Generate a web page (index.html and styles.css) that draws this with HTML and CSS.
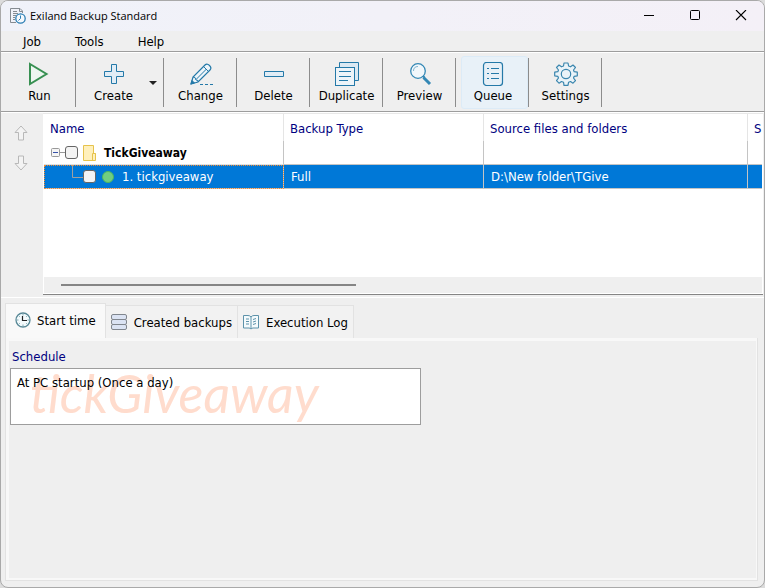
FILE: index.html
```html
<!DOCTYPE html>
<html lang="en">
<head>
<meta charset="utf-8">
<title>Exiland Backup Standard</title>
<link rel="stylesheet" href="styles.css">
</head>
<body>
<div class="window">
  <header class="titlebar">
    <svg class="app-icon" width="16" height="16" viewBox="0 0 16 16" fill="none">
      <path d="M6 14.500H.5V.5H10L12.500 3V5M9.500 1V3.500H12.500M3 3.500H7M3 5.500H8M3 7.500H6M3 9.500H5M3 11.500H5" stroke="#858b91"/>
      <circle cx="10.500" cy="10.500" r="4.700" fill="#f4f8fc" stroke="#2a7db3" stroke-width="1.300"/>
      <path d="M10.500 7.500V10.500L8.500 12.500" stroke="#2a7db3"/>
    </svg>
    <span class="title">Exiland Backup Standard</span>
    <button class="caption" aria-label="Minimize"><svg width="12" height="12" viewBox="0 0 12 12"><path d="M1 5.500H11" stroke="#000"/></svg></button>
    <button class="caption" aria-label="Maximize"><svg width="12" height="12" viewBox="0 0 12 12"><rect x="1.500" y=".5" width="9" height="9" rx="1" fill="none" stroke="#000"/></svg></button>
    <button class="caption" aria-label="Close"><svg width="12" height="12" viewBox="0 0 12 12"><path d="M1 0L11 10M11 0L1 10" stroke="#000" stroke-width="1.100"/></svg></button>
  </header>

  <nav class="menubar">
    <button>Job</button>
    <button>Tools</button>
    <button>Help</button>
  </nav>

  <div class="toolbar">
    <div class="tool"><button>
      <svg width="24" height="24" viewBox="0 0 24 24"><path d="M2 2L18.500 12L2 22Z" fill="#edf6f0" stroke="#389052" stroke-width="2"/></svg>
      <span>Run</span></button></div>
    <div class="tool split"><button>
      <svg width="24" height="24" viewBox="0 0 24 24"><path d="M9.500 2.500H14.500V9.500H21.500V14.500H14.500V21.500H9.500V14.500H2.500V9.500H9.500Z" fill="#e1edf6" stroke="#2479a8"/></svg>
      <span>Create</span></button>
      <button class="drop" aria-label="Create options"><svg width="8" height="4" viewBox="0 0 8 4"><path d="M0 0H8L4 4Z" fill="#222"/></svg></button></div>
    <div class="tool"><button>
      <svg width="24" height="24" viewBox="0 0 24 24" fill="none" stroke="#2479a8"><path d="M2 22L4 15L16 3Q18 1 20.500 3.500Q23 6 21 8L9 20Z" stroke-width="1.200" fill="#edf5fa"/><path d="M14.500 4.500L19.500 9.500M17.500 7L7 17.500M4 15L6 15.500L7 18L9 18.500V20"/><path d="M2 22L3 18.500L5.500 21Z" fill="#2479a8"/><path d="M11 22.500H24" stroke-dasharray="3 2"/></svg>
      <span>Change</span></button></div>
    <div class="tool"><button>
      <svg width="24" height="24" viewBox="0 0 24 24"><path d="M2.500 9.500H21.500V14.500H2.500Z" fill="#e1edf6" stroke="#2479a8"/></svg>
      <span>Delete</span></button></div>
    <div class="tool"><button>
      <svg width="24" height="24" viewBox="0 0 24 24" fill="none" stroke="#2479a8"><path d="M4.500 5V.5H23.500V18.500H20" fill="#dbe9f3"/><rect x=".5" y="5.500" width="19" height="18" fill="#edf4f9"/><path d="M4 9.500H16M4 14.500H16M4 18.500H13" stroke-width="1.200"/></svg>
      <span>Duplicate</span></button></div>
    <div class="tool"><button>
      <svg width="24" height="24" viewBox="0 0 24 24" fill="none" stroke="#3488b5"><circle cx="10" cy="9" r="7.300" fill="#f1f7fb" stroke-width="1.300"/><path d="M5.500 9Q5.500 4.500 10 4.500" stroke="#82b4ce"/><path d="M15 14L16.500 15.500" stroke-width="2"/><path d="M15.500 15.500L22 22" stroke-width="3"/></svg>
      <span>Preview</span></button></div>
    <div class="tool"><button class="active">
      <svg width="24" height="24" viewBox="0 0 24 24" fill="none" stroke="#2479a8"><rect x="2.500" y=".5" width="19" height="23" rx="3" fill="#e7f0f7" stroke-width="1.200"/><path d="M6 6.500H8M10 6.500H18M6 11.500H8M10 11.500H18M6 16.500H8M10 16.500H18"/></svg>
      <span>Queue</span></button></div>
    <div class="tool"><button>
      <svg width="24" height="24" viewBox="0 0 24 24" fill="none" stroke="#3b86ae" stroke-width="1.200"><path d="M10 1H14L14.600 4L16.500 4.800L19 3L21.500 5.500L19.500 8L20.200 9.700L23.300 10.200V13.800L20.200 14.300L19.500 16L21.500 18.700L19 21.200L16.500 19.500L14.600 20.200L14 23.300H10L9.500 20.200L7.500 19.500L5 21.200L2.500 18.700L4.500 16L3.800 14.300L.7 13.800V10.200L3.800 9.700L4.500 8L2.500 5.500L5 3L7.500 4.800L9.500 4Z" fill="#eaf3f8" stroke-linejoin="round"/><circle cx="12" cy="12" r="4.700"/></svg>
      <span>Settings</span></button></div>
  </div>

  <main class="jobs">
    <div class="order">
      <button aria-label="Move up"><svg width="14" height="16" viewBox="0 0 14 16"><path d="M4.500 15V7.500H1L7 1L13 7.500H9.500V15Z" fill="#f3f3f3" stroke="#b8b8b8"/></svg></button>
      <button aria-label="Move down"><svg width="14" height="16" viewBox="0 0 14 16"><path d="M4.500 1V8.500H1L7 15L13 8.500H9.500V1Z" fill="#f3f3f3" stroke="#b8b8b8"/></svg></button>
    </div>
    <div class="list">
      <div class="rows">
        <table>
          <colgroup><col class="c-name"><col class="c-type"><col class="c-source"><col class="c-more"></colgroup>
          <thead><tr><th>Name</th><th>Backup Type</th><th>Source files and folders</th><th>S</th></tr></thead>
          <tbody>
            <tr class="group">
              <td><label class="node">
                <svg class="expander" width="14" height="9" viewBox="0 0 14 9"><rect x=".5" y=".5" width="8" height="8" rx="1" fill="#f5f5f5" stroke="#999"/><path d="M2 4.500H7" stroke="#3651a8"/><path d="M9 4.500H14" stroke="#999"/></svg>
                <input type="checkbox">
                <svg class="folder" width="14" height="16" viewBox="0 0 14 16"><path d="M.5.5H10.500V8.500H12.500V15.500H.5Z" fill="#fff0bc" stroke="#e6c34c"/><path d="M9.500 15V8.500H12.500" fill="none" stroke="#e6c34c"/></svg>
                <b>TickGiveaway</b></label></td>
              <td></td><td></td><td></td>
            </tr>
            <tr class="selected">
              <td><label class="node child">
                <svg class="branch" width="11" height="24" viewBox="0 0 11 24"><path d="M.5 0V12.500H11" fill="none" stroke="#a0a0a0"/></svg>
                <input type="checkbox">
                <span class="status"></span>
                <span>1. tickgiveaway</span></label></td>
              <td>Full</td><td>D:\New folder\TGive</td><td></td>
            </tr>
          </tbody>
        </table>
      </div>
      <div class="scroll"><div class="thumb"></div></div>
    </div>
  </main>

  <section class="details">
    <div class="tabs" role="tablist">
      <button class="tab current" role="tab" aria-selected="true">
        <svg width="16" height="16" viewBox="0 0 16 16" fill="none"><circle cx="8" cy="8" r="7" fill="#f3fafc" stroke="#588896" stroke-width="1.300"/><path d="M8 2V3.500M8 12.500V14M2 8H3.500M12.500 8H14M3.800 3.800L4.800 4.800M11.200 11.200L12.200 12.200M12.200 3.800L11.200 4.800M3.800 12.200L4.800 11.200" stroke="#83aab4"/><path d="M7.500 4V8.500H12" stroke="#222" stroke-width="1.200"/></svg>
        <span>Start time</span></button>
      <button class="tab" role="tab">
        <svg width="16" height="16" viewBox="0 0 16 16" fill="#dbe3f3" stroke="#80868e"><rect x=".5" y=".5" width="15" height="5" rx="1.500"/><rect x=".5" y="5.500" width="15" height="5" rx="1.500"/><rect x=".5" y="10.500" width="15" height="5" rx="1.500"/></svg>
        <span>Created backups</span></button>
      <button class="tab" role="tab">
        <svg width="16" height="16" viewBox="0 0 16 16" fill="#f4fafc" stroke="#5d92aa"><path d="M.5 1.500H5Q7 1.500 8 3Q9 1.500 11 1.500H15.500V14H10Q9 14 8 15Q7 14 6 14H.5Z"/><path d="M8 3V14.500M3 5H6M3 7.500H6M3 10H6M10 5.500L13 4.500M10 8L13 7M10 10.500L13 9.500"/></svg>
        <span>Execution Log</span></button>
    </div>
    <div class="panel" role="tabpanel">
      <h2>Schedule</h2>
      <div class="schedule">
        <span class="watermark" aria-hidden="true">tickGiveaway</span>
        <p>At PC startup (Once a day)</p>
      </div>
    </div>
  </section>
</div>
</body>
</html>
```
FILE: styles.css
```css
* { box-sizing: border-box; }
body {
  margin: 0;
  background: #dcdcdc;
  color: #000;
  font: 13px/16px "DejaVu Sans Condensed", Tahoma, "DejaVu Sans", sans-serif;
}
button {
  margin: 0;
  padding: 0;
  border: 0;
  background: none;
  color: inherit;
  font: inherit;
}
svg { display: block; flex: none; }

.window {
  display: flex;
  flex-direction: column;
  min-height: 100vh;
  border: 1px solid #a9a9a9;
  border-radius: 8px;
  background: #efefef;
  overflow: hidden;
}

.titlebar {
  display: flex;
  align-items: center;
  height: 30px;
  padding-left: 9px;
  background: linear-gradient(90deg, #f0f2f9, #f4f0f7);
}
.title {
  flex: 1;
  margin-left: 4px;
  font: 11px/16px "Open Sans", "Segoe UI", sans-serif;
}
.caption {
  display: grid;
  place-items: center;
  width: 46px;
  height: 30px;
}

.menubar {
  display: flex;
  gap: 14px;
  height: 21px;
  border-bottom: 1px solid #9d9d9d;
  padding-left: 12px;
}
.menubar button { padding: 1px 10px 0; }

.toolbar {
  display: flex;
  height: 60px;
  padding: 5px 0 4px 2px;
  border-top: 1px solid #fff;
  border-bottom: 1px solid #9d9d9d;
}
.tool {
  display: flex;
  width: 73px;
  border-right: 1px solid #8c8c8c;
}
.tool > button {
  display: flex;
  flex: 1;
  flex-direction: column;
  align-items: center;
  gap: 2px;
  padding: 4px 0 0 1px;
}
.tool.split { width: 88px; }
.tool.split > button { padding-left: 8px; }
.tool.split > button.drop {
  flex: none;
  justify-content: center;
  width: 20px;
  padding: 0;
}
.tool > button.active {
  margin: -2px 0 -2px 5px;
  padding: 5px 3px 0 0;
  border: 1px solid #dcebf7;
  border-radius: 3px;
  background: #e8f1f8;
}

.jobs {
  display: flex;
  height: 186px;
  border-top: 1px solid #fff;
  border-bottom: 1px solid #fff;
}
.order {
  display: flex;
  flex: none;
  flex-direction: column;
  align-items: center;
  gap: 14px;
  width: 42px;
  padding: 12px 2px 0 0;
}
.list {
  display: flex;
  flex: 1;
  flex-direction: column;
  min-width: 0;
  height: 182px;
  margin-right: 1px;
  padding: 0 1px;
  border-top: 1px solid #e8e8e8;
  border-bottom: 1px solid #858585;
  background: #fff;
}
.rows { flex: 1; overflow: hidden; }
table {
  width: 904px;
  border-collapse: separate;
  border-spacing: 0;
  table-layout: fixed;
}
.c-name { width: 240px; }
.c-type { width: 200px; }
.c-source { width: 264px; }
th, td {
  padding: 0 6px;
  border-right: 1px solid #c4c4c4;
  text-align: left;
  font-weight: normal;
}
th { height: 27px; padding-top: 2px; border-color: #e5e5e5; color: #000080; }
td { height: 24px; border-bottom: 1px solid #c4c4c4; }
td + td { padding-left: 7px; }
.group td:first-child { border-bottom-color: #e0e0e0; }
.selected td { background: #0078d7; color: #fff; }
.selected td:first-child { outline: 1px dotted #f28c35; outline-offset: -1px; }
.node { display: flex; align-items: center; height: 23px; }
.node.child { padding-left: 22px; }
.node b { margin-left: 7px; font-size: 12px; }
.expander { margin-left: 1px; }
.folder { margin-left: 5px; }
.status {
  width: 12px;
  height: 12px;
  margin: 0 8px 0 6px;
  border: 1px solid #4db660;
  border-radius: 50%;
  background: #71ce80;
}
input {
  appearance: none;
  width: 13px;
  height: 13px;
  margin: 0;
  border: 1px solid #666;
  border-radius: 3px;
  background: #f4f4f4;
}
.scroll { height: 17px; padding: 7px 16px 7px 17px; background: #efefef; border-bottom: 1px solid #fff; }
.thumb { width: 43%; height: 2px; background: #858585; }

.details {
  display: flex;
  flex: 1;
  flex-direction: column;
  padding: 5px 6px 6px 4px;
}
.tabs { display: flex; align-items: flex-end; }
.tab {
  display: flex;
  align-items: center;
  gap: 7px;
  height: 33px;
  padding: 0 5px;
  border: 1px solid #e2e2e2;
  border-left: 0;
  border-bottom: 0;
  background: #f2f2f2;
}
.tab span { padding-top: 1px; }
.tab.current {
  gap: 6px;
  height: 35px;
  padding: 0 9px 2px;
  border-left: 1px solid #e2e2e2;
  background: #f9f9f9;
}
.panel {
  flex: 1;
  padding: 7px 2px;
  border: 1px solid #e2e2e2;
  border-top: 0;
  background: #efefef;
  box-shadow: inset 3px 3px #f8f8f8, inset -1px -2px #f8f8f8;
}
h2 { margin: 4px 4px 3px; color: #000080; font: inherit; }
.schedule {
  position: relative;
  width: 55%;
  height: 57px;
  margin-left: 2px;
  padding: 6px;
  border: 1px solid #9d9d9d;
  background: #fff;
}
.schedule p { position: relative; margin: 0; }
.watermark {
  position: absolute;
  top: 2px;
  left: 19px;
  color: #ffdccd;
  font: italic 52px/44px Lato, sans-serif;
}
```
